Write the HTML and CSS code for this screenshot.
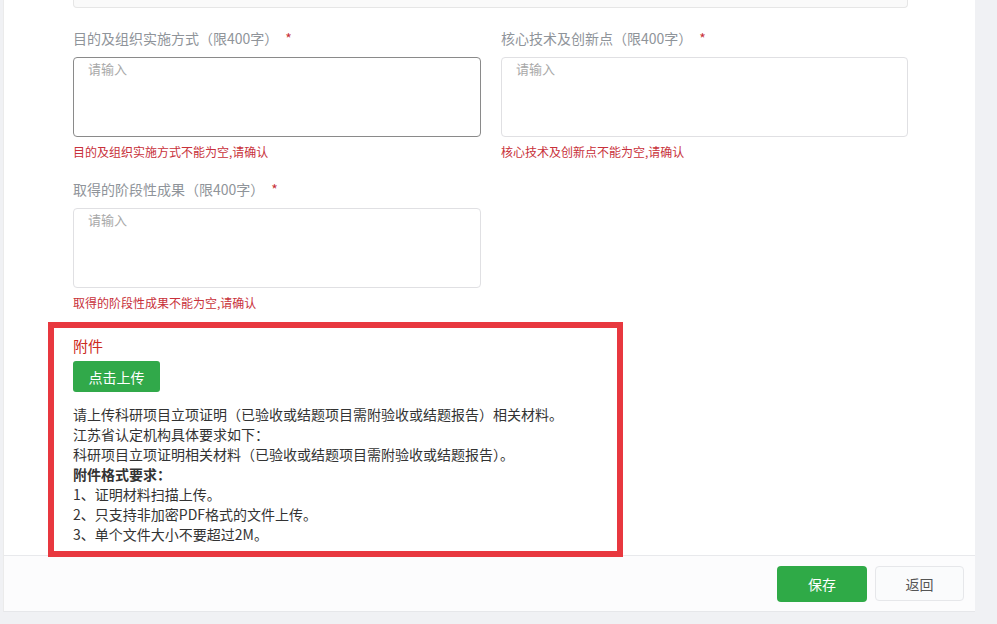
FILE: index.html
```html
<!DOCTYPE html>
<html lang="zh-CN">
<head>
    <meta charset="UTF-8">
    <meta name="viewport" content="width=device-width, initial-scale=1.0">
    <title>项目信息</title>
    <link rel="stylesheet" href="styles.css">
</head>
<body>
    <div class="card">
        <div class="formBody">
            <div class="prevField"></div>
            <div class="grid">
                <div class="item">
                    <label class="label" for="mudi">目的及组织实施方式（限400字）<span class="star">*</span></label>
                    <textarea id="mudi" class="area active" placeholder="请输入"></textarea>
                    <div class="error">目的及组织实施方式不能为空,请确认</div>
                </div>
                <div class="item">
                    <label class="label" for="hexin">核心技术及创新点（限400字）<span class="star">*</span></label>
                    <textarea id="hexin" class="area" placeholder="请输入"></textarea>
                    <div class="error">核心技术及创新点不能为空,请确认</div>
                </div>
                <div class="item">
                    <label class="label" for="chengguo">取得的阶段性成果（限400字）<span class="star">*</span></label>
                    <textarea id="chengguo" class="area" placeholder="请输入"></textarea>
                    <div class="error">取得的阶段性成果不能为空,请确认</div>
                </div>
            </div>
            <div class="attach">
                <div class="attachTitle">附件</div>
                <button class="upload" type="button">点击上传</button>
                <div class="tips">
                    <p>请上传科研项目立项证明（已验收或结题项目需附验收或结题报告）相关材料。</p>
                    <p>江苏省认定机构具体要求如下：</p>
                    <p>科研项目立项证明相关材料（已验收或结题项目需附验收或结题报告）。</p>
                    <p class="bold">附件格式要求：</p>
                    <p>1、证明材料扫描上传。</p>
                    <p>2、只支持非加密PDF格式的文件上传。</p>
                    <p>3、单个文件大小不要超过2M。</p>
                </div>
            </div>
        </div>
        <div class="footer">
            <button class="btn save" type="button">保存</button>
            <button class="btn back" type="button">返回</button>
        </div>
    </div>
</body>
</html>
```

FILE: styles.css
```css
    body {
        margin: 0;
        background-color: #f0f1f4;
        font-family: "Noto Sans CJK SC", "Noto Sans", sans-serif;
        height: 624px;
        overflow: hidden;
    }
    .card {
        margin-left: 3px;
        width: 972px;
        height: 612px;
        box-sizing: border-box;
        background-color: white;
        border-left: 1px solid #ebebeb;
        border-bottom: 1px solid #e6e7ea;
        display: flex;
        flex-direction: column;
    }
    .formBody {
        padding: 0 67px 0 69px;
    }
    .prevField {
        height: 8px;
        box-sizing: border-box;
        background-color: #fafafa;
        border: 1px solid #e6e6e6;
        border-top: none;
        border-radius: 0 0 4px 4px;
    }
    .grid {
        display: grid;
        grid-template-columns: 408px 407px;
        column-gap: 20px;
        row-gap: 19px;
        margin-top: 20px;
    }
    .label {
        display: block;
        font-size: 14px;
        line-height: 20px;
        color: #8f949a;
        margin-bottom: 9px;
    }
    .star {
        color: #c8313a;
        margin-left: 7px;
    }
    .area {
        display: block;
        width: 100%;
        height: 80px;
        box-sizing: border-box;
        border: 1px solid #e0e0e3;
        border-radius: 4px;
        padding: 1px 14px;
        font-family: inherit;
        font-size: 13px;
        resize: none;
        outline: none;
    }
    .area.active {
        border-color: #8a8a8a;
    }
    .area::placeholder {
        color: #a8a8a8;
    }
    .error {
        margin-top: 7px;
        font-size: 12px;
        line-height: 16px;
        color: #c8313a;
    }
    .attach {
        position: relative;
        z-index: 1;
        width: 575px;
        box-sizing: border-box;
        margin: 11px 0 -2px -25px;
        border: 6px solid #e8383f;
        padding: 8px 18px 7px 19px;
        background-color: white;
    }
    .attachTitle {
        font-size: 15px;
        line-height: 20px;
        color: #cc2a22;
    }
    .upload {
        display: block;
        margin-top: 5px;
        width: 87px;
        height: 31px;
        border: none;
        border-radius: 3px;
        background-color: #31a94a;
        color: white;
        font-family: inherit;
        font-size: 14px;
        cursor: pointer;
    }
    .tips {
        margin-top: 12px;
        font-size: 14px;
        line-height: 20px;
        color: #333;
    }
    .tips p {
        margin: 0;
        white-space: nowrap;
    }
    .tips .bold {
        font-weight: bold;
    }
    .footer {
        flex: 1;
        border-top: 1px solid #e8e9ec;
        background-color: #fcfcfd;
        display: flex;
        justify-content: flex-end;
        align-items: flex-start;
        gap: 8px;
        padding: 10px 11px 0 0;
    }
    .btn {
        width: 90px;
        height: 36px;
        border-radius: 4px;
        font-family: inherit;
        font-size: 14px;
        cursor: pointer;
    }
    .save {
        background-color: #2faa47;
        border: none;
        color: white;
    }
    .back {
        width: 89px;
        height: 35px;
        background-color: #fafbfc;
        border: 1px solid #e6e7ea;
        color: #555;
    }
```
